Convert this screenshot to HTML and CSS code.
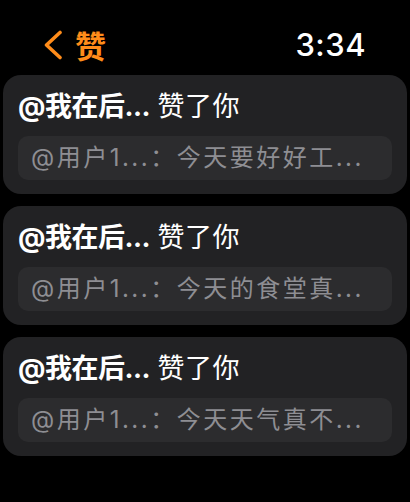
FILE: index.html
```html
<!DOCTYPE html>
<html lang="zh-CN">
<head>
<meta charset="utf-8">
<title>赞</title>
<link rel="stylesheet" href="styles.css">
</head>
<body>
<div class="screen">
  <header class="header">
    <div class="back">
      <svg class="chevron" width="22" height="30" viewBox="0 0 22 30" aria-hidden="true">
        <polyline points="18,2.5 4.5,15 18,27.5" fill="none" stroke="#ff8c1a" stroke-width="3.6" stroke-linecap="round" stroke-linejoin="round"/>
      </svg>
      <span class="back-title">赞</span>
    </div>
    <span class="time">3:34</span>
  </header>
  <main class="list">
    <div class="card">
      <div class="title"><span class="name">@我在后...</span> <span class="action">赞了你</span></div>
      <div class="quote">@用户1...：今天要好好工...</div>
    </div>
    <div class="card">
      <div class="title"><span class="name">@我在后...</span> <span class="action">赞了你</span></div>
      <div class="quote">@用户1...：今天的食堂真...</div>
    </div>
    <div class="card">
      <div class="title"><span class="name">@我在后...</span> <span class="action">赞了你</span></div>
      <div class="quote">@用户1...：今天天气真不...</div>
    </div>
  </main>
</div>
</body>
</html>
```
FILE: styles.css
```css
html, body {
  margin: 0;
  padding: 0;
  background: #000;
}
body {
  width: 410px;
  height: 502px;
  overflow: hidden;
  font-family: "Inter", "Noto Sans CJK SC", sans-serif;
  color: #fff;
}
.screen {
  display: flex;
  flex-direction: column;
}
.header {
  box-sizing: border-box;
  height: 75px;
  padding: 14px 44px 0 42px;
  display: flex;
  align-items: center;
  justify-content: space-between;
}
.back {
  display: flex;
  align-items: center;
  gap: 11px;
}
.chevron {
  display: block;
}
.back-title {
  color: #ff8c1a;
  font-family: "Noto Sans CJK SC", sans-serif;
  font-weight: 700;
  font-size: 31px;
  line-height: 36px;
  height: 36px;
}
.time {
  font-size: 31px;
  font-weight: 500;
  line-height: 36px;
  height: 36px;
  letter-spacing: 0.5px;
}
.list {
  display: flex;
  flex-direction: column;
  gap: 12px;
  padding: 0 3px;
}
.card {
  box-sizing: border-box;
  height: 119px;
  background: #222224;
  border-radius: 18px;
  padding: 13px 15px 14px;
  display: flex;
  flex-direction: column;
  gap: 14px;
}
.title {
  flex: none;
  height: 34px;
  font-size: 27px;
  line-height: 34px;
  white-space: nowrap;
}
.name {
  font-weight: 700;
  letter-spacing: -0.5px;
}
.action {
  font-family: "Noto Sans CJK SC", sans-serif;
  font-weight: 400;
  letter-spacing: 0.5px;
}
.quote {
  box-sizing: border-box;
  flex: none;
  background: #2c2c2e;
  border-radius: 10px;
  height: 44px;
  line-height: 44px;
  padding: 0 10px 0 13px;
  font-size: 24px;
  letter-spacing: 2.5px;
  color: #8e8e93;
  white-space: nowrap;
  overflow: hidden;
}
```
